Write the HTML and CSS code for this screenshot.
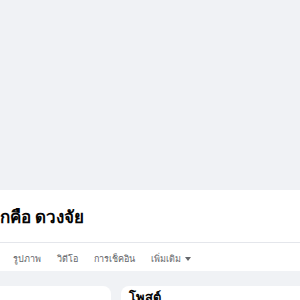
FILE: index.html
```html
<!DOCTYPE html>
<html lang="th">
<head>
<meta charset="utf-8">
<link rel="stylesheet" href="styles.css">
</head>
<body>
<div class="cover"></div>
<section class="profile">
  <div class="name-row">
    <h1 class="name">กคือ ดวงจัย</h1>
  </div>
  <nav class="tabs">
    <span class="tab">รูปภาพ</span>
    <span class="tab">วิดีโอ</span>
    <span class="tab">การเช็คอิน</span>
    <span class="tab">เพิ่มเติม <span class="caret"></span></span>
  </nav>
</section>
<main class="content">
  <div class="card left"></div>
  <div class="card right"><h2 class="card-title">โพสต์</h2></div>
</main>
</body>
</html>
```
FILE: styles.css
```css
html, body {
  margin: 0;
  padding: 0;
  background: #f0f2f5;
  font-family: "Noto Sans", "Liberation Sans", sans-serif;
  overflow: hidden;
}
.cover {
  height: 190px;
  background: #f0f2f5;
}
.profile {
  background: #fff;
}
.name-row {
  height: 52px;
  display: flex;
  align-items: center;
  border-bottom: 1px solid #e4e6eb;
}
.name {
  margin: 0;
  font-size: 17px;
  font-weight: 700;
  color: #050505;
  line-height: 1;
}
.tabs {
  height: 25px;
  padding-top: 3px;
  display: flex;
  align-items: center;
  gap: 16px;
  padding-left: 13px;
  font-size: 9px;
  color: #65676b;
}
.tab {
  display: inline-flex;
  align-items: center;
  gap: 4px;
}
.caret {
  width: 0;
  height: 0;
  border-left: 3px solid transparent;
  border-right: 3px solid transparent;
  border-top: 4px solid #65676b;
}
.content {
  display: flex;
  gap: 10px;
  padding-top: 15px;
}
.card {
  background: #fff;
  height: 30px;
  border-radius: 0 8px 0 0;
}
.left {
  width: 111px;
}
.right {
  flex: 1;
  border-radius: 8px 0 0 0;
  padding: 0 8px;
}
.card-title {
  margin: 3px 0 0;
  font-size: 13px;
  line-height: 16px;
  font-weight: 700;
  color: #050505;
}
```
